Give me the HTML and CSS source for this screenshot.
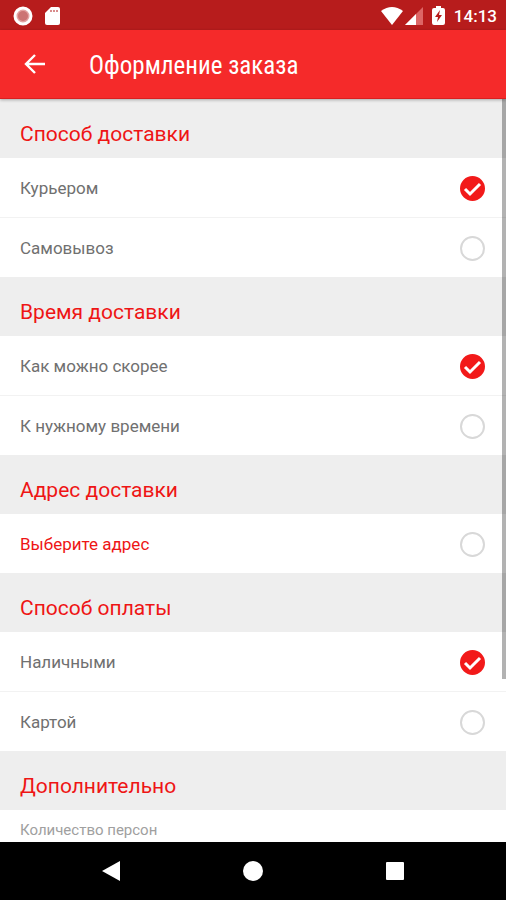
FILE: index.html
```html
<!DOCTYPE html>
<html lang="ru">
<head>
  <meta charset="utf-8" />
  <meta name="viewport" content="width=device-width, initial-scale=1" />
  <title>Оформление заказа</title>
  <link rel="stylesheet" href="styles.css">
</head>
<body>
  <!-- Status bar -->
  <div class="status-bar">
    <svg class="status-icon" width="20" height="20" viewBox="0 0 20 20">
      <circle cx="10" cy="10" r="8" fill="#e3a3a3" stroke="#fff" stroke-width="3" />
      <circle cx="10" cy="10" r="5" fill="#cc7474" />
    </svg>
    <svg class="status-icon" width="20" height="20" viewBox="0 0 20 20">
      <path d="M8 1h7q2 0 2 2v14q0 2-2 2H4q-2 0-2-2V7z" fill="#fff" />
      <path d="M7 4h2v2H7zM10 4h2v2h-2zM13 4h2v2h-2z" fill="#d98c8c" />
    </svg>
    <div class="status-right">
      <svg width="22" height="20" viewBox="0 0 22 20">
        <path d="M0 5Q11-3 22 5L11 19z" fill="#fff" />
      </svg>
      <svg width="18" height="18" viewBox="0 0 18 18">
        <path d="M18 0v18H0z" fill="#d66" />
        <path d="M11 7v11H0z" fill="#fff" />
      </svg>
      <svg class="battery" width="13" height="19" viewBox="0 0 13 19">
        <path d="M4 0h5v2h2q2 0 2 2v13q0 2-2 2H2q-2 0-2-2V4q0-2 2-2h2z" fill="#fff" />
        <path d="M8 4L3 11h3l-1 5 5-7H7z" fill="#b71c1c" />
      </svg>
      <span class="clock">14:13</span>
    </div>
  </div>

  <!-- App bar -->
  <header class="app-bar">
    <button class="back" type="button" aria-label="Назад">
      <svg width="22" height="20" viewBox="0 0 22 20" fill="none" stroke="#fff" stroke-width="2.4">
        <path d="M21 10H3M11 1L2 10l9 9" />
      </svg>
    </button>
    <h1>Оформление заказа</h1>
  </header>

  <!-- Order form -->
  <form class="content">
    <h2>Способ доставки</h2>
    <label class="row">
      <span>Курьером</span>
      <input type="radio" name="delivery" checked>
      <svg class="tick" viewBox="0 0 25 25"><path d="M5 13l5 5L20 8" /></svg>
    </label>
    <label class="row">
      <span>Самовывоз</span>
      <input type="radio" name="delivery">
      <svg class="tick" viewBox="0 0 25 25"><path d="M5 13l5 5L20 8" /></svg>
    </label>

    <h2>Время доставки</h2>
    <label class="row">
      <span>Как можно скорее</span>
      <input type="radio" name="time" checked>
      <svg class="tick" viewBox="0 0 25 25"><path d="M5 13l5 5L20 8" /></svg>
    </label>
    <label class="row">
      <span>К нужному времени</span>
      <input type="radio" name="time">
      <svg class="tick" viewBox="0 0 25 25"><path d="M5 13l5 5L20 8" /></svg>
    </label>

    <h2>Адрес доставки</h2>
    <label class="row required">
      <span>Выберите адрес</span>
      <input type="radio" name="address">
      <svg class="tick" viewBox="0 0 25 25"><path d="M5 13l5 5L20 8" /></svg>
    </label>

    <h2>Способ оплаты</h2>
    <label class="row">
      <span>Наличными</span>
      <input type="radio" name="payment" checked>
      <svg class="tick" viewBox="0 0 25 25"><path d="M5 13l5 5L20 8" /></svg>
    </label>
    <label class="row">
      <span>Картой</span>
      <input type="radio" name="payment">
      <svg class="tick" viewBox="0 0 25 25"><path d="M5 13l5 5L20 8" /></svg>
    </label>

    <h2>Дополнительно</h2>
    <div class="field">
      <label for="persons">Количество персон</label>
      <input id="persons" type="text" inputmode="numeric">
    </div>
    <div class="scrollbar"></div>
  </form>

  <!-- System navigation -->
  <nav class="nav-bar">
    <button type="button" aria-label="Назад">
      <svg width="20" height="22" viewBox="0 0 20 22"><path d="M19 1v20L1 11z" /></svg>
    </button>
    <button type="button" aria-label="Домой">
      <svg width="22" height="22" viewBox="0 0 22 22"><circle cx="11" cy="11" r="10" /></svg>
    </button>
    <button type="button" aria-label="Обзор">
      <svg width="20" height="20" viewBox="0 0 20 20"><rect x="1" y="1" width="18" height="18" rx="1" /></svg>
    </button>
  </nav>
</body>
</html>
```
FILE: styles.css
```css
* {
  box-sizing: border-box;
}
body {
  margin: 0;
  height: 100vh;
  display: flex;
  flex-direction: column;
  font-family: Roboto, "Noto Sans", sans-serif;
  background: #fff;
}
button {
  display: flex;
  align-items: center;
  justify-content: center;
  padding: 0;
  border: 0;
  background: none;
}

/* Status bar */
.status-bar {
  flex: none;
  display: flex;
  align-items: center;
  gap: 10px;
  height: 30px;
  padding: 1px 9px 0 13px;
  background: #b71c1c;
}
.status-right {
  display: flex;
  align-items: center;
  gap: 2px;
  margin-left: auto;
}
.battery {
  margin: 0 7px;
}
.clock {
  font-size: 17px;
  font-weight: 500;
  line-height: 20px;
  color: #fff;
}

/* App bar */
.app-bar {
  flex: none;
  display: flex;
  align-items: center;
  height: 69px;
  padding: 0 24px;
  gap: 43px;
  background: #f52a2a;
  border-bottom: 1px solid #d92020;
  box-shadow: 0 1px 3px rgba(0, 0, 0, 0.3);
  z-index: 1;
}
.app-bar h1 {
  margin: 4px 0 0;
  font-family: "Roboto Condensed", Roboto, sans-serif;
  font-size: 25px;
  font-weight: 400;
  line-height: 32px;
  color: #fff;
}

/* Order form */
.content {
  position: relative;
  flex: 1;
  min-height: 0;
  overflow: hidden;
}
.content h2 {
  height: 59px;
  margin: 0;
  padding: 20px 20px 0;
  font-size: 21px;
  font-weight: 400;
  line-height: 30px;
  color: #ee1515;
  background: #eee;
}
.row {
  display: flex;
  align-items: center;
  justify-content: space-between;
  height: 59px;
  padding: 1px 21px 0 20px;
  font-size: 17px;
  line-height: 24px;
  color: #707070;
}
.row + .row {
  height: 60px;
  border-top: 1px solid #f2f2f2;
}
.required {
  color: #ee1515;
}
.row input {
  appearance: none;
  width: 25px;
  height: 25px;
  margin: 0;
  border: 2px solid #d8d8d8;
  border-radius: 50%;
}
.row input:checked {
  border-color: #f21a1a;
  background: #f21a1a;
}
.tick {
  display: none;
  width: 25px;
  height: 25px;
  margin-left: -25px;
  fill: none;
  stroke: #fff;
  stroke-width: 3;
}
.row span {
  flex: 1;
}
.row input:checked + .tick {
  display: block;
}
.field {
  display: flex;
  flex-direction: column;
  gap: 8px;
  padding: 10px 20px;
}
.field label {
  font-size: 15px;
  line-height: 20px;
  color: #a0a0a0;
}
.field input {
  height: 32px;
  border: 0;
  border-bottom: 1px solid #d8d8d8;
}
.scrollbar {
  position: absolute;
  top: 0;
  right: 0;
  width: 4px;
  height: 78%;
  background: rgba(0, 0, 0, 0.3);
}

/* System navigation */
.nav-bar {
  flex: none;
  display: flex;
  justify-content: center;
  gap: 98px;
  height: 58px;
  background: #000;
}
.nav-bar button {
  width: 44px;
}
.nav-bar svg {
  fill: #fff;
}
```
